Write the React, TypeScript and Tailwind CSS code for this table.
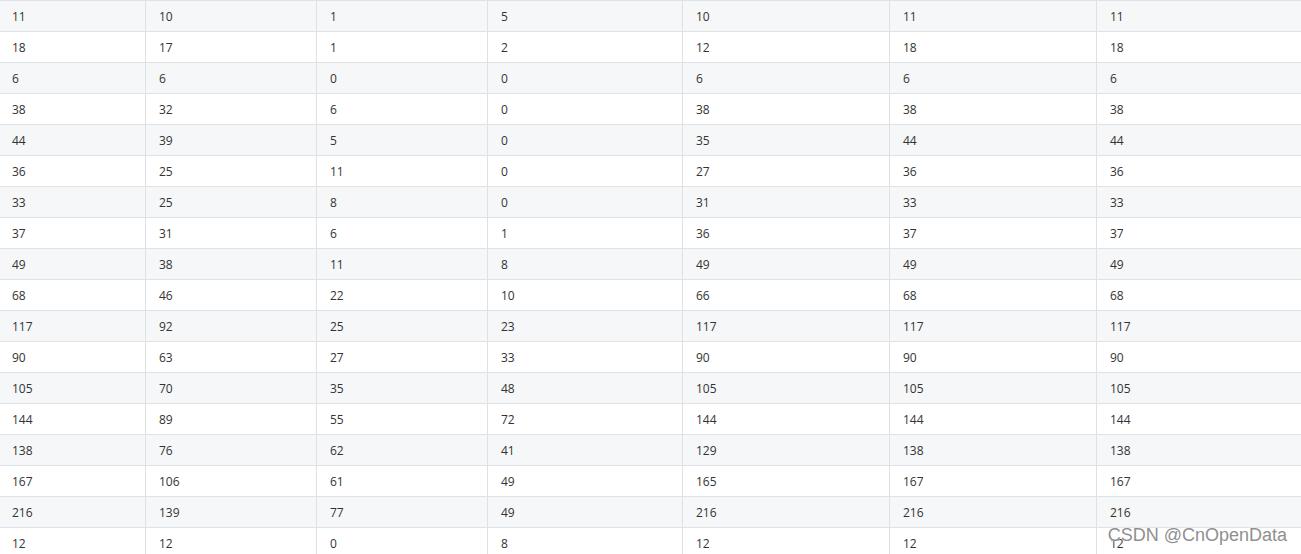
const rows: number[][] = [
  [11, 10, 1, 5, 10, 11, 11],
  [18, 17, 1, 2, 12, 18, 18],
  [6, 6, 0, 0, 6, 6, 6],
  [38, 32, 6, 0, 38, 38, 38],
  [44, 39, 5, 0, 35, 44, 44],
  [36, 25, 11, 0, 27, 36, 36],
  [33, 25, 8, 0, 31, 33, 33],
  [37, 31, 6, 1, 36, 37, 37],
  [49, 38, 11, 8, 49, 49, 49],
  [68, 46, 22, 10, 66, 68, 68],
  [117, 92, 25, 23, 117, 117, 117],
  [90, 63, 27, 33, 90, 90, 90],
  [105, 70, 35, 48, 105, 105, 105],
  [144, 89, 55, 72, 144, 144, 144],
  [138, 76, 62, 41, 129, 138, 138],
  [167, 106, 61, 49, 165, 167, 167],
  [216, 139, 77, 49, 216, 216, 216],
  [12, 12, 0, 8, 12, 12, 12],
];

export default function App() {
  return (
    <div className="relative h-[554px] w-full overflow-hidden bg-white font-['Open_Sans',sans-serif] text-[12px] text-[#333]">
      <div className="flex flex-col">
        {rows.map((row, i) => (
          <div
            key={i}
            className={`grid h-[31px] grid-cols-[145px_171px_171px_195px_207px_207px_1fr] border-t border-[#dfe2e5] ${
              i % 2 === 0 ? "bg-[#f6f7f9]" : "bg-white"
            }`}
          >
            {row.map((v, j) => (
              <div
                key={j}
                className={`flex items-center pt-px ${
                  j === 0 ? "pl-3" : "border-l border-[#dfe2e5] pl-[13px]"
                }`}
              >
                {v}
              </div>
            ))}
          </div>
        ))}
      </div>
      <span className="absolute top-[526px] right-[14px] font-['Liberation_Sans',Arial,sans-serif] text-[18px] leading-none text-[#8f8f8f] [text-shadow:0_0_1px_#fff,0_0_1px_#fff]">
        CSDN @CnOpenData
      </span>
    </div>
  );
}
